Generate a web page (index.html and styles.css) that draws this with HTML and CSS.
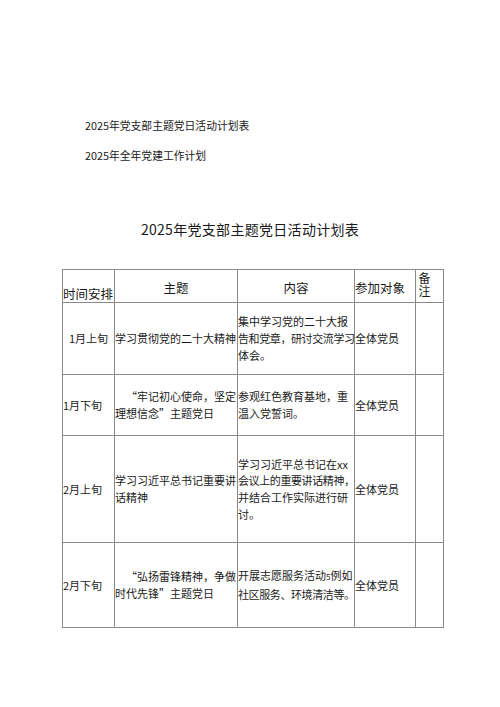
FILE: index.html
```html
<!DOCTYPE html>
<html lang="zh-CN">
<head>
<meta charset="utf-8">
<title>2025年党支部主题党日活动计划表</title>
<link rel="stylesheet" href="styles.css">
</head>
<body>
<div class="page">
  <div class="toc">
    <div class="toc-item">2025年党支部主题党日活动计划表</div>
    <div class="toc-item second">2025年全年党建工作计划</div>
  </div>
  <h1 class="title">2025年党支部主题党日活动计划表</h1>
  <table class="plan">
    <colgroup>
      <col class="c1"><col class="c2"><col class="c3"><col class="c4"><col class="c5">
    </colgroup>
    <thead>
      <tr class="head">
        <th class="h-time">时间安排</th>
        <th class="h-center">主题</th>
        <th class="h-center">内容</th>
        <th class="h-left">参加对象</th>
        <th class="h-note"><span class="note-v">备注</span></th>
      </tr>
    </thead>
    <tbody>
      <tr class="r1">
        <td class="time center">1月上旬</td>
        <td>学习贯彻党的二十大精神</td>
        <td class="nowrap">集中学习党的二十大报<br><span class="tight">告和党章，研讨交流学习</span><br>体会。</td>
        <td>全体党员</td>
        <td></td>
      </tr>
      <tr class="r2">
        <td class="time">1月下旬</td>
        <td class="indent">“牢记初心使命，坚定理想信念”主题党日</td>
        <td class="nowrap">参观红色教育基地，重<br>温入党誓词。</td>
        <td>全体党员</td>
        <td></td>
      </tr>
      <tr class="r3">
        <td class="time">2月上旬</td>
        <td>学习习近平总书记重要讲话精神</td>
        <td class="nowrap">学习习近平总书记在xx<br><span class="tight">会议上的重要讲话精神，</span><br>并结合工作实际进行研<br>讨。</td>
        <td>全体党员</td>
        <td></td>
      </tr>
      <tr class="r4">
        <td class="time">2月下旬</td>
        <td class="indent">“弘扬雷锋精神，争做时代先锋”主题党日</td>
        <td class="nowrap">开展志愿服务活动<span class="small">5</span>例如<br><span class="tight">社区服务、环境清洁等。</span></td>
        <td>全体党员</td>
        <td></td>
      </tr>
    </tbody>
  </table>
</div>
</body>
</html>
```
FILE: styles.css
```css
html, body {
  margin: 0;
  padding: 0;
  background: #ffffff;
}
body {
  font-family: "Noto Sans CJK SC", "Noto Sans", sans-serif;
  color: #1a1a1a;
}
.page {
  width: 500px;
  height: 707px;
  overflow: hidden;
}
.toc {
  padding-top: 117px;
  padding-left: 85px;
}
.toc-item {
  font-size: 10.8px;
  line-height: 16px;
  height: 16px;
}
.toc-item.second {
  margin-top: 14px;
}
.title {
  margin: 56px 0 0 0;
  text-align: center;
  font-size: 14px;
  font-weight: normal;
  line-height: 20px;
  height: 20px;
  letter-spacing: 0.3px;
}
.plan {
  margin: 30px 0 0 62px;
  border-collapse: collapse;
  table-layout: fixed;
  width: 382px;
  font-size: 11px;
  line-height: 16.7px;
}
.c1 { width: 52px; }
.c2 { width: 123px; }
.c3 { width: 117px; }
.c4 { width: 61px; }
.c5 { width: 28px; }
.plan th, .plan td {
  border: 1px solid #8a8a8a;
  padding: 0;
  vertical-align: middle;
  text-align: left;
  font-weight: normal;
}
.plan th {
  font-size: 12.5px;
  line-height: 13px;
}
.head { height: 33px; }
.r1 { height: 72px; }
.r2 { height: 61px; }
.r3 { height: 107px; }
.r4 { height: 85px; }
.h-time {
  vertical-align: bottom !important;
  padding-bottom: 2px !important;
}
.h-center { text-align: center !important; padding-top: 3px !important; }
.h-left { padding-top: 3px !important; }
.h-note {
  vertical-align: top !important;
  padding: 2px 0 0 2px !important;
}
.note-v {
  display: inline-block;
  writing-mode: vertical-rl;
  text-orientation: upright;
  font-size: 12px;
  line-height: 13px;
  letter-spacing: 1px;
}
.center { text-align: center !important; }
.indent { text-indent: 11px; }
.nowrap { white-space: nowrap; }
.tight { letter-spacing: -0.4px; }
.small { font-size: 8px; }
```
